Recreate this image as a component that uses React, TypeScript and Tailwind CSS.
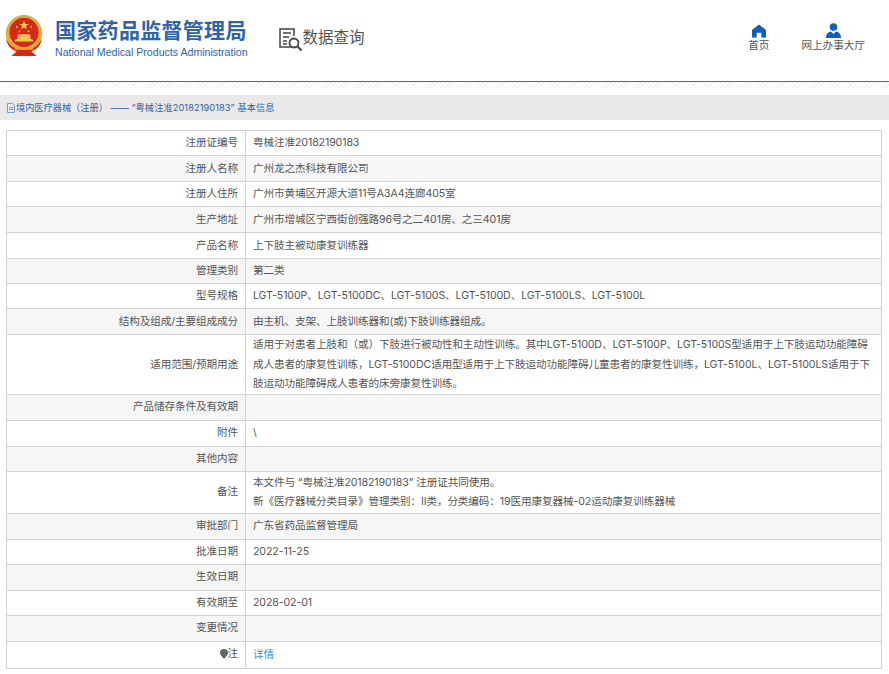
const ROWS: { label: string; value?: React.ReactNode; h: string }[] = [
  { label: "注册证编号", value: "粤械注准20182190183", h: "h-[25px]" },
  { label: "注册人名称", value: "广州龙之杰科技有限公司", h: "h-[26px]" },
  { label: "注册人住所", value: "广州市黄埔区开源大道11号A3A4连廊405室", h: "h-[25px]" },
  { label: "生产地址", value: "广州市增城区宁西街创强路96号之二401房、之三401房", h: "h-[26px]" },
  { label: "产品名称", value: "上下肢主被动康复训练器", h: "h-[26px]" },
  { label: "管理类别", value: "第二类", h: "h-[25px]" },
  { label: "型号规格", value: "LGT-5100P、LGT-5100DC、LGT-5100S、LGT-5100D、LGT-5100LS、LGT-5100L", h: "h-[25px]" },
  { label: "结构及组成/主要组成成分", value: "由主机、支架、上肢训练器和(或)下肢训练器组成。", h: "h-[26px]" },
  {
    label: "适用范围/预期用途",
    value:
      "适用于对患者上肢和（或）下肢进行被动性和主动性训练。其中LGT-5100D、LGT-5100P、LGT-5100S型适用于上下肢运动功能障碍成人患者的康复性训练，LGT-5100DC适用型适用于上下肢运动功能障碍儿童患者的康复性训练，LGT-5100L、LGT-5100LS适用于下肢运动功能障碍成人患者的床旁康复性训练。",
    h: "h-[59px]",
  },
  { label: "产品储存条件及有效期", h: "h-[26px]" },
  { label: "附件", value: "\\", h: "h-[26px]" },
  { label: "其他内容", h: "h-[25px]" },
  {
    label: "备注",
    value: (
      <>
        本文件与 “粤械注准20182190183” 注册证共同使用。
        <br />
        新《医疗器械分类目录》管理类别：II类，分类编码：19医用康复器械-02运动康复训练器械
      </>
    ),
    h: "h-[42px]",
  },
  { label: "审批部门", value: "广东省药品监督管理局", h: "h-[26px]" },
  { label: "批准日期", value: "2022-11-25", h: "h-[25px]" },
  { label: "生效日期", h: "h-[26px]" },
  { label: "有效期至", value: "2028-02-01", h: "h-[25px]" },
  { label: "变更情况", h: "h-[26px]" },
];

function Emblem() {
  return (
    <svg width="40" height="42" viewBox="0 0 44 46" className="shrink-0">
      <circle cx="22" cy="20" r="20" fill="#e0ac38" />
      <circle cx="22" cy="19" r="16" fill="#d9261c" />
      <polygon points="22,6 23.3,9.8 27.2,9.800 24,12.100 25.2,15.800 22,13.500 18.800,15.800 20,12.100 16.800,9.800 20.700,9.800" fill="#f6d04d" />
      <circle cx="14" cy="13" r="1" fill="#f6d04d" />
      <circle cx="30" cy="13" r="1" fill="#f6d04d" />
      <circle cx="17" cy="18" r="1" fill="#f6d04d" />
      <circle cx="27" cy="18" r="1" fill="#f6d04d" />
      <path d="M12 29h20v-2l-3-1v-3h1l-2-2H16l-2 2h1v3l-3 1z" fill="#f2c94c" />
      <path d="M2 26c2 8 6 12 12 14l-6 5h28l-6-5c6-2 10-6 12-14l-5 7c-3 3-9 5-15 5s-12-2-15-5z" fill="#d9261c" />
      <path d="M14 35h16l3 3H11z" fill="#e0ac38" />
    </svg>
  );
}

function SearchDocIcon() {
  return (
    <svg width="24" height="24" viewBox="0 0 24 24" fill="none" stroke="#444" className="shrink-0">
      <path d="M12 19H1V1h14v7" strokeWidth="1.500" />
      <path d="M4 5h8M4 9h6M4 13h4M4 16h4" strokeWidth="1.300" />
      <circle cx="15" cy="15" r="4.500" strokeWidth="1.800" />
      <path d="M18.500 18.500l4 4" strokeWidth="2.200" />
    </svg>
  );
}

function NavItem({ icon, label }: { icon: React.ReactNode; label: string }) {
  return (
    <div className="flex flex-col items-center text-[10.6px] leading-[14px] text-[#555]">
      <div className="flex h-[15px] items-end">{icon}</div>
      <span className="mt-[1px]">{label}</span>
    </div>
  );
}

export default function App() {
  return (
    <div className="h-[674px] overflow-hidden bg-white font-['Inter','Noto_Sans_CJK_SC',sans-serif]">
      <header className="flex h-[82px] items-start border-b border-[#2470b0]">
        <div className="ml-[4px] mt-[15px]">
          <Emblem />
        </div>
        <div className="ml-[11px] mt-[17px]">
          <div className="text-[21px] font-bold leading-[28px] tracking-[0.3px] text-[#2e64ac]">国家药品监督管理局</div>
          <div className="font-['Liberation_Sans',sans-serif] text-[10.6px] leading-[14px] text-[#2e64ac]">
            National Medical Products Administration
          </div>
        </div>
        <div className="ml-[31px] mt-[28px] flex items-start">
          <SearchDocIcon />
          <span className="text-[15.500px] leading-[20px] text-[#555]">数据查询</span>
        </div>
        <div className="ml-auto mr-[24px] mt-[23px] flex gap-[32px]">
          <NavItem
            label="首页"
            icon={
              <svg width="14" height="14" viewBox="0 0 15 14" fill="#0f5fc0">
                <path d="M7.500 0L15 6v8h-5V9H5v5H0V6z" />
              </svg>
            }
          />
          <NavItem
            label="网上办事大厅"
            icon={
              <svg width="15" height="15" viewBox="0 0 15 15" fill="#0f5fc0">
                <circle cx="7.500" cy="4" r="3.800" />
                <path d="M0 15c0-4 2-6 5-6.500L7.500 11 10 8.500c3 .5 5 2.500 5 6.500z" />
              </svg>
            }
          />
        </div>
      </header>
      <div className="mb-[7px] h-[6px] bg-[repeating-linear-gradient(135deg,#efefef_0,#efefef_1px,#fff_1px,#fff_3px)]" />
      <div className="flex h-[25px] items-center bg-[#e9e9ea] pl-[7px] text-[9.200px] text-[#2d62a8]">
        <svg width="8" height="10" viewBox="0 0 8 10" fill="none" stroke="#7f9cc0" className="mr-px">
          <path d="M.5.5h5l2 2v7h-7zM2 4.500h4M2 6.500h4" />
        </svg>
        境内医疗器械（注册） ——&nbsp;
        <span className="tracking-[0.1px]">“粤械注准20182190183” 基本信息</span>
      </div>
      <div className="ml-[6px] mr-[7px] mt-[10px]">
        <table className="w-full table-fixed border-collapse border border-[#d2d2d2] text-[10.600px] leading-[19.500px] tracking-[-0.1px] text-[#555]">
          <colgroup>
            <col className="w-[239px]" />
            <col />
          </colgroup>
          <tbody>
            {ROWS.map((row, i) => (
              <tr key={row.label} className={`${row.h} ${i % 2 === 1 ? "bg-[#f6f6f6]" : "bg-white"}`}>
                <td className="border border-[#d2d2d2] pr-[7px] text-right align-middle">{row.label}</td>
                <td className="border border-[#d2d2d2] px-[7px] align-middle">{row.value}</td>
              </tr>
            ))}
            <tr className="h-[27px]">
              <td className="border border-[#d2d2d2] pr-[7px] text-right align-middle">
                <span className="inline-flex items-center">
                  <svg width="8" height="10" viewBox="0 0 8 10" fill="#666">
                    <path d="M4 0a4 4 0 0 1 4 4c0 2-2 3.500-4 6-2-2.500-4-4-4-6a4 4 0 0 1 4-4z" />
                  </svg>
                  注
                </span>
              </td>
              <td className="border border-[#d2d2d2] px-[7px] align-middle text-[#3f8fdc]">详情</td>
            </tr>
          </tbody>
        </table>
      </div>
    </div>
  );
}
